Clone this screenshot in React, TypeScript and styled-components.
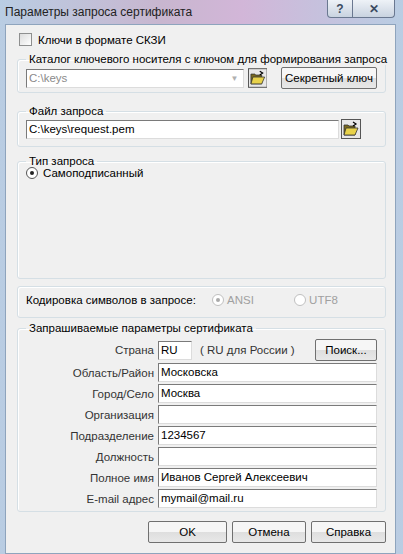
import React from "react";
import styled, { createGlobalStyle } from "styled-components";

const G = createGlobalStyle`
  html,body{margin:0;padding:0;width:403px;height:554px;overflow:hidden;background:#c9d7e6;}
  *{box-sizing:border-box;}
  body{font-family:"Liberation Sans",Arial,sans-serif;font-size:11.5px;color:#000;}
`;
const Win = styled.div`width:403px;height:554px;display:flex;flex-direction:column;
  background:linear-gradient(90deg,#b9cde3,#c8b6cf 40%,#d2b6d8 60%,#b9cde3);`;
const Title = styled.div`height:24px;position:relative;padding:5px 0 0 5px;color:#222;font-size:12px;`;
const Caps = styled.div`position:absolute;right:8px;top:0;display:flex;`;
const Cap = styled.div<{w:number}>`width:${p=>p.w}px;height:18px;border:1px solid #6a7890;border-top:none;
  background:linear-gradient(#eef2f7,#c9d3e0);display:flex;align-items:center;justify-content:center;
  font-weight:bold;color:#3a4a60;font-size:12px;&:first-child{border-radius:0 0 0 4px;}&:last-child{border-radius:0 0 4px 0;border-left:none;}`;
const Client = styled.div`flex:1;margin:0 7px 0 5px;background:#f0f0f0;border:1px solid #8ea4bd;padding:8px 9px 0 11px;display:flex;flex-direction:column;`;
const Row = styled.div<{gap?:number}>`display:flex;align-items:center;gap:${p=>p.gap??4}px;white-space:nowrap;`;
const Box = styled.span`width:13px;height:13px;border:1px solid #8e8f8f;background:linear-gradient(135deg,#dcdcdc,#fff);display:inline-block;`;
const Group = styled.fieldset<{h:number;mt:number}>`margin:${p=>p.mt}px 0 0 0;height:${p=>p.h}px;border:1px solid #d5dfe5;border-radius:3px;
  padding:2px 8px 0 8px;min-width:0;box-shadow:inset 1px 1px 0 #fff;`;
const Legend = styled.legend`padding:0 3px;margin-left:0;white-space:nowrap;`;
const Input = styled.div<{w?:number;dis?:boolean}>`height:19px;border:1px solid;border-color:#7a7a7a #dcdcdc #dcdcdc #7a7a7a;background:#fff;
  ${p=>p.w?`width:${p.w}px;`:"flex:1;"}padding:2px 2px;color:${p=>p.dis?"#8a8a8a":"#000"};white-space:nowrap;overflow:hidden;`;
const Combo = styled(Input)`display:flex;justify-content:space-between;padding-right:0;`;
const Arrow = styled.span`width:16px;color:#b0b0b0;font-size:8px;text-align:center;padding-top:2px;`;
const Btn = styled.div<{w:number}>`width:${p=>p.w}px;height:22px;border:1px solid #707070;border-radius:2px;
  background:linear-gradient(#f6f6f6 50%,#dedede 50%,#e8e8e8);display:flex;align-items:center;justify-content:center;`;
const Radio = styled.span<{dis?:boolean;on?:boolean}>`width:12px;height:12px;border-radius:50%;border:1px solid ${p=>p.dis?"#c0c0c0":"#555"};
  background:#fff;display:inline-flex;align-items:center;justify-content:center;
  &::after{content:"";width:4px;height:4px;border-radius:50%;background:${p=>p.on?(p.dis?"#aaa":"#222"):"transparent"};}`;
const Dim = styled.span`color:#a0a0a0;`;
const Label = styled.div`width:128px;text-align:right;color:#333;`;
const Fields = styled.div`display:flex;flex-direction:column;gap:2px;padding-top:3px;`;
const Footer = styled.div`display:flex;justify-content:flex-end;gap:5px;margin-top:9px;`;

const Folder = () => (
  <svg width="20" height="20" viewBox="0 0 20 20">
    <rect x="0.5" y="0.5" width="19" height="19" fill="#e8e8e8" stroke="#555"/>
    <path d="M3 6h4l1 1h6v9H3z" fill="#7a6a20" stroke="#333" strokeWidth="0.8"/>
    <path d="M5 9h12l-3 7H3z" fill="#e8d24a" stroke="#333" strokeWidth="0.8"/>
    <path d="M12 3l3 2-3 2" fill="none" stroke="#000" strokeWidth="1.2"/>
  </svg>
);

const fields: [string,string][] = [
  ["Область/Район","Московска"],["Город/Село","Москва"],["Организация",""],["Подразделение","1234567"],
  ["Должность",""],["Полное имя","Иванов Сергей Алексеевич"],["E-mail адрес","mymail@mail.ru"],
];

export default function App(){
  return (<Win><G/>
    <Title>Параметры запроса сертификата<Caps><Cap w={26}>?</Cap><Cap w={42}>✕</Cap></Caps></Title>
    <Client>
      <Row gap={6} style={{marginLeft:2}}><Box/>Ключи в формате СКЗИ</Row>
      <Group h={40} mt={7}><Legend>Каталог ключевого носителя с ключом для формирования запроса</Legend>
        <Row gap={4}>
          <Combo w={222} dis>C:\keys<Arrow>▼</Arrow></Combo><Folder/><span style={{width:6}}/><Btn w={98}>Секретный ключ</Btn>
        </Row>
      </Group>
      <Group h={42} mt={12}><Legend>Файл запроса</Legend>
        <Row gap={2}><Input>C:\keys\request.pem</Input><Folder/><span style={{width:14}}/></Row>
      </Group>
      <Group h={124} mt={8}><Legend>Тип запроса</Legend>
        <Row gap={5} style={{marginTop:-2}}><Radio on/>Самоподписанный</Row>
      </Group>
      <Group h={32} mt={7} as="div" style={{paddingTop:7}}>
        <Row gap={0}>Кодировка символов в запросе:<span style={{width:16}}/><Radio dis on/><Dim>&nbsp;ANSI</Dim><span style={{width:40}}/><Radio dis/><Dim>&nbsp;UTF8</Dim></Row>
      </Group>
      <Group h={190} mt={4}><Legend>Запрашиваемые параметры сертификата</Legend>
        <Fields>
          <Row gap={4}><Label>Страна</Label><Input w={34}>RU</Input><span style={{marginLeft:4,color:"#333"}}>( RU для России )</span>
            <span style={{flex:1}}/><Btn w={62}>Поиск...</Btn></Row>
          {fields.map(([l,v])=>(<Row key={l} gap={4}><Label>{l}</Label><Input>{v}</Input></Row>))}
        </Fields>
      </Group>
      <Footer><Btn w={79}>OK</Btn><Btn w={74}>Отмена</Btn><Btn w={75}>Справка</Btn></Footer>
    </Client>
  </Win>);
}
